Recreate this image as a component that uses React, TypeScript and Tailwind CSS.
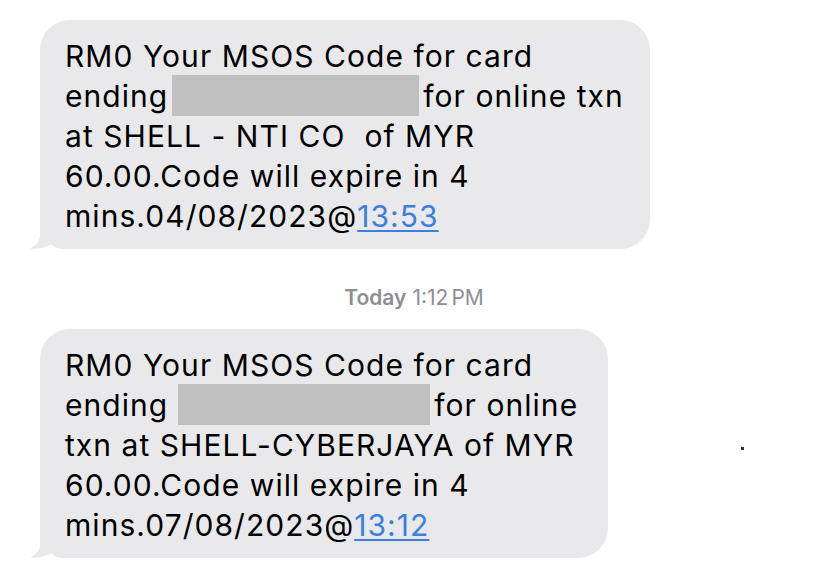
const font = { fontFamily: 'Inter, "Liberation Sans", sans-serif' }

function Tail() {
  return (
    <svg
      className="absolute -left-[12px] bottom-0"
      width="44"
      height="30"
      viewBox="0 0 44 30"
    >
      <path
        d="M12 0 L12 16 C12 22 8 27 2 29.5 C8 30.5 16 29 23 25.5 C27 28.5 31 30 36 30 L44 30 L44 0 Z"
        fill="#e9e9eb"
      />
    </svg>
  )
}

function Redacted({ width }: { width: string }) {
  return <span className={`inline-block align-top h-[41px] bg-[#c0c0c0] ${width}`} />
}

function Bubble({ width, lines }: { width: string; lines: React.ReactNode[] }) {
  return (
    <div className={`relative rounded-[30px] bg-[#e9e9eb] pl-[25px] pt-4 pb-[13px] ${width}`}>
      <Tail />
      <div className="relative text-[30px] leading-[40px] tracking-[1.05px] text-black whitespace-nowrap">
        {lines.map((l, i) => (
          <div key={i} className="h-[40px]">{l}</div>
        ))}
      </div>
    </div>
  )
}

export default function App() {
  return (
    <div className="relative w-[828px] h-[582px] bg-white overflow-hidden pl-10 pt-5" style={font}>
      <Bubble
        width="w-[610px]"
        lines={[
          'RM0 Your MSOS Code for card',
          <>
            ending<Redacted width="ml-[4px] mr-[4px] w-[247px] -mt-px" />for online txn
          </>,
          'at SHELL - NTI CO\u00a0 of MYR',
          '60.00.Code will expire in 4',
          <>
            mins.04/08/2023@<span className="text-[#3a80dd] underline decoration-2 underline-offset-[3px]">13:53</span>
          </>,
        ]}
      />

      <div className="-ml-10 mt-[37px] mb-[19px] h-6 flex items-center justify-center text-[21px] text-[#8e8e93]">
        <span className="font-semibold">Today</span>
        <span className="ml-[6px]">1:12</span>
        <span className="ml-[3px]">PM</span>
      </div>

      <Bubble
        width="w-[568px]"
        lines={[
          'RM0 Your MSOS Code for card',
          <>
            ending<Redacted width="ml-[10px] mr-[4px] w-[252px] -mt-px" />for online
          </>,
          'txn at SHELL-CYBERJAYA of MYR',
          '60.00.Code will expire in 4',
          <>
            mins.07/08/2023@<span className="text-[#3a80dd] underline decoration-2 underline-offset-[3px]">13:12</span>
          </>,
        ]}
      />

      <span className="absolute left-[741px] top-[447px] w-[3px] h-[3px] bg-[#333]" />
    </div>
  )
}
